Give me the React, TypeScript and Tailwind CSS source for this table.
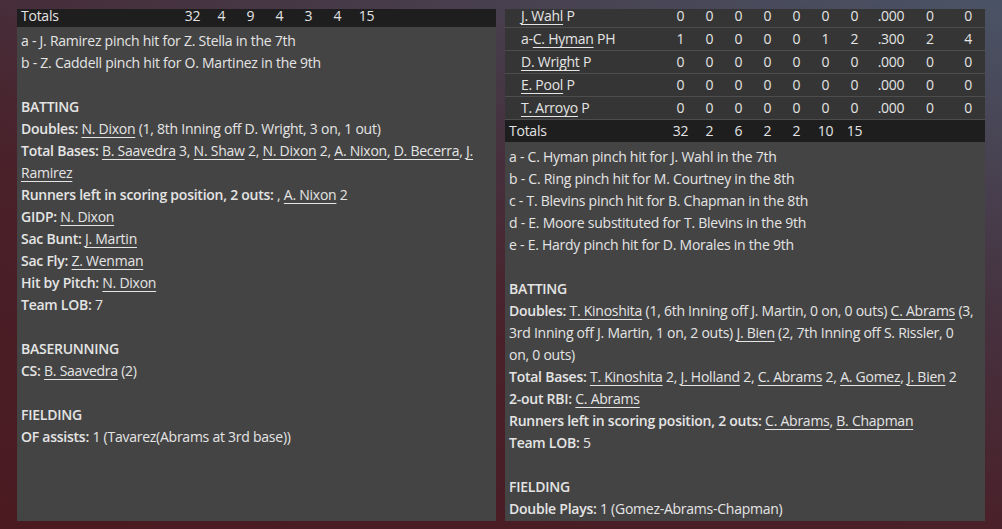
import React from "react";

type Part = string | { n: string };

const U = ({ children }: { children: React.ReactNode }) => (
  <span className="underline decoration-1 underline-offset-[3px]">{children}</span>
);

const renderParts = (parts: Part[]) =>
  parts.map((p, i) => (typeof p === "string" ? <span key={i}>{p}</span> : <U key={i}>{p.n}</U>));

const Line = ({ label, parts }: { label?: string; parts?: Part[] }) => (
  <p className="leading-[22px]">
    {label && <span className="font-semibold">{label} </span>}
    {parts && renderParts(parts)}
  </p>
);

const Heading = ({ children }: { children: React.ReactNode }) => (
  <p className="leading-[22px] font-semibold">{children}</p>
);

const Blank = () => <div className="h-[22px]" />;

const StatCells = ({ vals }: { vals: string[] }) => (
  <>
    {vals.slice(0, 7).map((v, i) => (
      <span key={i} className="w-[29px] text-center">{v}</span>
    ))}
    {vals.length > 7 && (
      <>
        <span className="w-[44px] text-center">{vals[7]}</span>
        <span className="w-[34px] text-center">{vals[8]}</span>
        <span className="w-[38px] text-right pr-[13px]">{vals[9]}</span>
      </>
    )}
  </>
);

const TotalsRow = ({ vals }: { vals: string[] }) => (
  <div className="flex bg-[#1e1e1e] h-[22px] leading-[22px]">
    <span className="w-[161px] pl-[4px]">Totals</span>
    <StatCells vals={vals} />
  </div>
);

const players = [
  { pre: "", name: "J. Wahl", pos: "P", vals: ["0", "0", "0", "0", "0", "0", "0", ".000", "0", "0"] },
  { pre: "a-", name: "C. Hyman", pos: "PH", vals: ["1", "0", "0", "0", "0", "1", "2", ".300", "2", "4"] },
  { pre: "", name: "D. Wright", pos: "P", vals: ["0", "0", "0", "0", "0", "0", "0", ".000", "0", "0"] },
  { pre: "", name: "E. Pool", pos: "P", vals: ["0", "0", "0", "0", "0", "0", "0", ".000", "0", "0"] },
  { pre: "", name: "T. Arroyo", pos: "P", vals: ["0", "0", "0", "0", "0", "0", "0", ".000", "0", "0"] },
];

// both panels are scrolled a few pixels down, so the first row is partly hidden
const LeftPanel = () => (
  <div className="w-[479px] h-[512px] bg-[#444444] overflow-hidden">
    <div className="-mt-[4px]">
      <TotalsRow vals={["32", "4", "9", "4", "3", "4", "15"]} />
      <div className="px-[4px] pt-[3px]">
        <Line parts={["a - J. Ramirez pinch hit for Z. Stella in the 7th"]} />
        <Line parts={["b - Z. Caddell pinch hit for O. Martinez in the 9th"]} />
        <Blank />
        <Heading>BATTING</Heading>
        <Line label="Doubles:" parts={[{ n: "N. Dixon" }, " (1, 8th Inning off D. Wright, 3 on, 1 out)"]} />
        <Line
          label="Total Bases:"
          parts={[
            { n: "B. Saavedra" }, " 3, ", { n: "N. Shaw" }, " 2, ", { n: "N. Dixon" }, " 2, ",
            { n: "A. Nixon" }, ", ", { n: "D. Becerra" }, ", ", { n: "J. Ramirez" },
          ]}
        />
        <Line label="Runners left in scoring position, 2 outs:" parts={[", ", { n: "A. Nixon" }, " 2"]} />
        <Line label="GIDP:" parts={[{ n: "N. Dixon" }]} />
        <Line label="Sac Bunt:" parts={[{ n: "J. Martin" }]} />
        <Line label="Sac Fly:" parts={[{ n: "Z. Wenman" }]} />
        <Line label="Hit by Pitch:" parts={[{ n: "N. Dixon" }]} />
        <Line label="Team LOB:" parts={["7"]} />
        <Blank />
        <Heading>BASERUNNING</Heading>
        <Line label="CS:" parts={[{ n: "B. Saavedra" }, " (2)"]} />
        <Blank />
        <Heading>FIELDING</Heading>
        <Line label="OF assists:" parts={["1 (Tavarez(Abrams at 3rd base))"]} />
      </div>
    </div>
  </div>
);

const RightPanel = () => (
  <div className="w-[480px] h-[512px] bg-[#444444] overflow-hidden">
    <div className="-mt-[4px]">
      {players.map((p) => (
        <div key={p.name} className="flex bg-[#353535] border-b border-[#4d4d4d] h-[23px] leading-[22px]">
          <span className="w-[161px] pl-[16px]">
            {p.pre}
            <U>{p.name}</U> {p.pos}
          </span>
          <StatCells vals={p.vals} />
        </div>
      ))}
      <TotalsRow vals={["32", "2", "6", "2", "2", "10", "15"]} />
      <div className="px-[4px] pt-[4px]">
        <Line parts={["a - C. Hyman pinch hit for J. Wahl in the 7th"]} />
        <Line parts={["b - C. Ring pinch hit for M. Courtney in the 8th"]} />
        <Line parts={["c - T. Blevins pinch hit for B. Chapman in the 8th"]} />
        <Line parts={["d - E. Moore substituted for T. Blevins in the 9th"]} />
        <Line parts={["e - E. Hardy pinch hit for D. Morales in the 9th"]} />
        <Blank />
        <Heading>BATTING</Heading>
        <div className="leading-[22px] whitespace-nowrap">
          <p>
            <span className="font-semibold">Doubles: </span>
            {renderParts([{ n: "T. Kinoshita" }, " (1, 6th Inning off J. Martin, 0 on, 0 outs) ", { n: "C. Abrams" }, " (3,"])}
          </p>
          <p>{renderParts(["3rd Inning off J. Martin, 1 on, 2 outs) ", { n: "J. Bien" }, " (2, 7th Inning off S. Rissler, 0"])}</p>
          <p>on, 0 outs)</p>
        </div>
        <Line
          label="Total Bases:"
          parts={[
            { n: "T. Kinoshita" }, " 2, ", { n: "J. Holland" }, " 2, ", { n: "C. Abrams" }, " 2, ",
            { n: "A. Gomez" }, ", ", { n: "J. Bien" }, " 2",
          ]}
        />
        <Line label="2-out RBI:" parts={[{ n: "C. Abrams" }]} />
        <Line label="Runners left in scoring position, 2 outs:" parts={[{ n: "C. Abrams" }, ", ", { n: "B. Chapman" }]} />
        <Line label="Team LOB:" parts={["5"]} />
        <Blank />
        <Heading>FIELDING</Heading>
        <Line label="Double Plays:" parts={["1 (Gomez-Abrams-Chapman)"]} />
      </div>
    </div>
  </div>
);

export default function App() {
  return (
    <div
      className="w-[1002px] h-[529px] overflow-hidden flex gap-[9px] pl-[17px] pt-[9px] text-[14px] tracking-[-0.25px] text-[#e4e4e4] bg-[linear-gradient(20deg,#4a1a20_0%,#4a2029_40%,#46323f_65%,#4a5466_100%)]"
      style={{ fontFamily: '"Open Sans", "Noto Sans", sans-serif' }}
    >
      <LeftPanel />
      <RightPanel />
    </div>
  );
}
